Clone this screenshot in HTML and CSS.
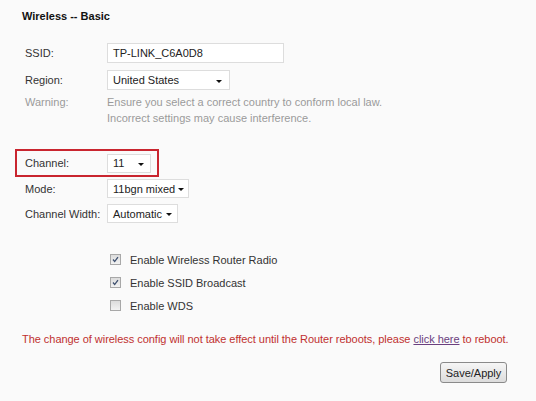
FILE: index.html
```html
<!DOCTYPE html>
<html lang="en">
<head>
    <meta charset="UTF-8">
    <title>Wireless -- Basic</title>
    <link rel="stylesheet" href="styles.css">
</head>
<body>
    <div class="page">
        <h1 class="title">Wireless -- Basic</h1>

        <div class="row row-ssid">
            <span class="label">SSID:</span>
            <span class="field text-field ssid">TP-LINK_C6A0D8</span>
        </div>
        <div class="row row-region">
            <span class="label">Region:</span>
            <span class="field select region">United States<i class="arrow"></i></span>
        </div>
        <div class="row warning">
            <span class="label">Warning:</span>
            <span class="note">Ensure you select a correct country to conform local law.<br>Incorrect settings may cause interference.</span>
        </div>

        <div class="row channel-box">
            <span class="label">Channel:</span>
            <span class="field select channel">11<i class="arrow"></i></span>
        </div>
        <div class="row row-mode">
            <span class="label">Mode:</span>
            <span class="field select mode">11bgn mixed<i class="arrow"></i></span>
        </div>
        <div class="row row-width">
            <span class="label">Channel Width:</span>
            <span class="field select width">Automatic<i class="arrow"></i></span>
        </div>

        <div class="checks">
            <label class="check"><span class="box on"><svg viewBox="0 0 11 11"><path d="M2.5 5.5 L4.5 8 L8.5 2.5" /></svg></span>Enable Wireless Router Radio</label>
            <label class="check"><span class="box on"><svg viewBox="0 0 11 11"><path d="M2.5 5.5 L4.5 8 L8.5 2.5" /></svg></span>Enable SSID Broadcast</label>
            <label class="check"><span class="box"></span>Enable WDS</label>
        </div>

        <p class="notice">The change of wireless config will not take effect until the Router reboots, please <a href="#">click here</a> to reboot.</p>

        <div class="actions">
            <button class="btn">Save/Apply</button>
        </div>
    </div>
</body>
</html>
```

FILE: styles.css
```css
body {
    margin: 0;
    background-color: #fafafa;
    font-family: "Liberation Sans", Arial, sans-serif;
    font-size: 11px;
    color: #333;
}
.page {
    padding: 0 29px 0 22px;
}
.title {
    margin: 8px 0 0;
    font-size: 11px;
    line-height: 16px;
    font-weight: bold;
    color: #111;
}
.row {
    display: flex;
    align-items: center;
    padding-left: 3px;
}
.label {
    width: 82px;
    flex-shrink: 0;
}
.field {
    box-sizing: border-box;
    display: flex;
    align-items: center;
    background-color: #fff;
    border: 1px solid #ddd;
    padding: 0 5px;
    color: #222;
}
.row-ssid {
    margin-top: 19px;
    height: 20px;
}
.ssid {
    width: 177px;
    height: 20px;
}
.row-region {
    margin-top: 7px;
    height: 20px;
}
.select {
    justify-content: space-between;
    height: 20px;
}
.arrow {
    width: 0;
    height: 0;
    border-left: 3px solid transparent;
    border-right: 3px solid transparent;
    border-top: 3px solid #111;
    margin-top: 2px;
}
.region {
    width: 123px;
    padding-right: 7px;
}
.warning {
    margin-top: 4px;
    align-items: flex-start;
    color: #9a9a9a;
    line-height: 16px;
}
.channel-box {
    box-sizing: border-box;
    margin: 23px 0 0 -7px;
    padding-left: 8px;
    width: 144px;
    height: 28px;
    border: 2px solid #c9252f;
}
.channel {
    width: 44px;
    height: 19px;
    padding-right: 6px;
}
.row-mode {
    margin-top: 2px;
    height: 19px;
}
.mode {
    width: 82px;
    height: 19px;
    padding-right: 4px;
}
.row-width {
    margin-top: 6px;
    height: 19px;
}
.width {
    width: 71px;
    height: 19px;
    padding-right: 5px;
}
.checks {
    margin-top: 25px;
    padding-left: 88px;
}
.check {
    display: flex;
    align-items: center;
    height: 23px;
}
.box {
    box-sizing: border-box;
    width: 11px;
    height: 11px;
    margin-right: 9px;
    border: 1px solid #a8a8a8;
    background: linear-gradient(#dcdcdc, #f2f2f2);
    display: flex;
}
.box svg {
    width: 9px;
    height: 9px;
}
.box path {
    fill: none;
    stroke: #3d4f6e;
    stroke-width: 1.6;
}
.notice {
    margin: 14px -20px 0 0;
    line-height: 16px;
    color: #c0302f;
    white-space: nowrap;
    letter-spacing: -0.04px;
}
.notice a {
    color: #6a3f7e;
}
.actions {
    display: flex;
    justify-content: flex-end;
    margin-top: 15px;
}
.btn {
    width: 67px;
    height: 21px;
    padding: 0;
    font-family: "Liberation Sans", Arial, sans-serif;
    font-size: 11px;
    color: #222;
    background: linear-gradient(#f6f6f6, #dcdcdc);
    border: 1px solid #8a8a8a;
    border-radius: 3px;
}
```
